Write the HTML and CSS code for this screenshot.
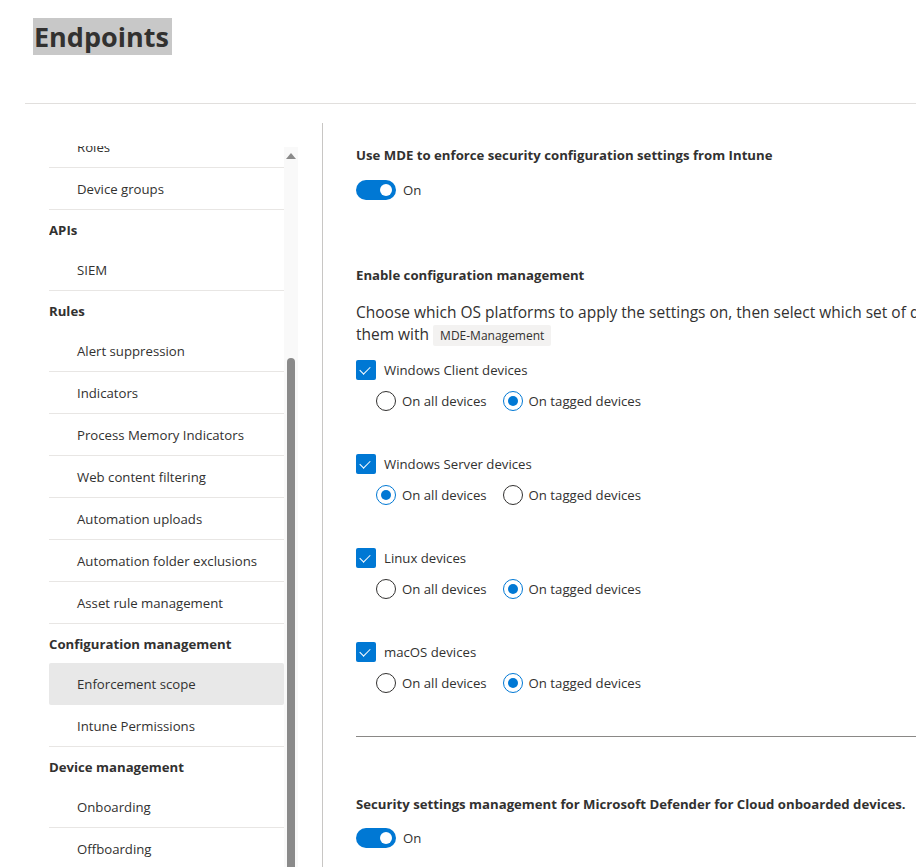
FILE: index.html
```html
<!DOCTYPE html>
<html lang="en">
<head>
    <meta charset="UTF-8">
    <title>Endpoints</title>
    <link rel="stylesheet" href="styles.css">
</head>
<body>

<div class="top">
    <h1><span>Endpoints</span></h1>
</div>

<div class="main">
    <div class="side">
        <div class="nav-view">
            <ul class="nav">
                <li class="item">Roles</li>
                <li class="item">Device groups</li>
                <li class="group">APIs</li>
                <li class="item">SIEM</li>
                <li class="group">Rules</li>
                <li class="item">Alert suppression</li>
                <li class="item">Indicators</li>
                <li class="item">Process Memory Indicators</li>
                <li class="item">Web content filtering</li>
                <li class="item">Automation uploads</li>
                <li class="item">Automation folder exclusions</li>
                <li class="item">Asset rule management</li>
                <li class="group">Configuration management</li>
                <li class="item selected">Enforcement scope</li>
                <li class="item">Intune Permissions</li>
                <li class="group">Device management</li>
                <li class="item">Onboarding</li>
                <li class="item">Offboarding</li>
            </ul>
        </div>
        <div class="scrollbar">
            <div class="arrow"></div>
            <div class="thumb"></div>
        </div>
    </div>

    <div class="content">
        <h3 class="first">Use MDE to enforce security configuration settings from Intune</h3>
        <div class="toggle-row"><span class="toggle"></span>On</div>

        <h3 class="second">Enable configuration management</h3>
        <p class="desc">Choose which OS platforms to apply the settings on, then select which set of devices to apply the settings to. Tag<br>them with <span class="tag">MDE-Management</span></p>

        <div class="platforms">
            <div class="platform">
                <div class="check-row"><span class="check"></span>Windows Client devices</div>
                <div class="radio-row">
                    <label><span class="radio"></span>On all devices</label>
                    <label><span class="radio on"></span>On tagged devices</label>
                </div>
            </div>
            <div class="platform">
                <div class="check-row"><span class="check"></span>Windows Server devices</div>
                <div class="radio-row">
                    <label><span class="radio on"></span>On all devices</label>
                    <label><span class="radio"></span>On tagged devices</label>
                </div>
            </div>
            <div class="platform">
                <div class="check-row"><span class="check"></span>Linux devices</div>
                <div class="radio-row">
                    <label><span class="radio"></span>On all devices</label>
                    <label><span class="radio on"></span>On tagged devices</label>
                </div>
            </div>
            <div class="platform">
                <div class="check-row"><span class="check"></span>macOS devices</div>
                <div class="radio-row">
                    <label><span class="radio"></span>On all devices</label>
                    <label><span class="radio on"></span>On tagged devices</label>
                </div>
            </div>
        </div>

        <hr class="divider">

        <h3 class="third">Security settings management for Microsoft Defender for Cloud onboarded devices.</h3>
        <div class="toggle-row last"><span class="toggle"></span>On</div>
    </div>
</div>

</body>
</html>
```

FILE: styles.css
```css
body {
    font-family: "Segoe UI", "Open Sans", Arial, sans-serif;
    font-size: 13.2px;
    color: #323130;
    background: #fff;
    margin: 0;
    overflow: hidden;
    height: 867px;
}
.top {
    margin-left: 25px;
    height: 103px;
    border-bottom: 1px solid #e1dfdd;
}
.top h1 {
    margin: 0;
    padding: 18px 0 0 8px;
    font-size: 27px;
    font-weight: 700;
    line-height: 37px;
}
.top h1 span {
    display: inline-block;
    background: #c8c8c8;
    padding: 0 3px 0 1px;
}
.main {
    display: flex;
    height: 763px;
}
.side {
    width: 323px;
    flex-shrink: 0;
    display: flex;
    margin-top: 19px;
    border-right: 1px solid #c8c6c4;
    box-sizing: border-box;
}
.nav-view {
    margin: 23px 0 0 49px;
    width: 235px;
    overflow: hidden;
}
.nav {
    list-style: none;
    margin: -20px 0 0;
    padding: 0;
}
.nav li {
    box-sizing: border-box;
    display: flex;
    align-items: center;
}
.nav .item {
    height: 42px;
    padding-left: 28px;
    border-bottom: 1px solid #e8e6e4;
}
.nav .group {
    height: 39px;
    font-weight: 700;
}
.nav .selected {
    background: #e8e8e8;
    border-radius: 2px;
    border-bottom-color: transparent;
}
.scrollbar {
    width: 14px;
    margin-top: 24px;
    background: #f9f9f9;
    display: flex;
    flex-direction: column;
    align-items: center;
}
.scrollbar .arrow {
    margin-top: 6px;
    width: 0;
    height: 0;
    border-left: 5px solid transparent;
    border-right: 5px solid transparent;
    border-bottom: 6px solid #8a8a8a;
}
.scrollbar .thumb {
    margin-top: 199px;
    width: 8px;
    flex: 1;
    background: #8a8a8a;
    border-radius: 4px 4px 0 0;
}
.content {
    padding-left: 33px;
    width: 800px;
    flex-shrink: 0;
}
.content h3 {
    font-size: 13.2px;
    font-weight: 700;
    margin: 0;
    line-height: 20px;
}
.content h3.first {
    margin-top: 41px;
}
.content h3.second {
    margin-top: 65px;
}
.content h3.third {
    margin-top: 57px;
}
.toggle-row {
    display: flex;
    align-items: center;
    gap: 7px;
    margin-top: 15px;
    height: 20px;
}
.toggle-row.last {
    margin-top: 14px;
}
.toggle {
    width: 40px;
    height: 20px;
    border-radius: 10px;
    background: #0078d4;
    position: relative;
}
.toggle::after {
    content: "";
    position: absolute;
    right: 4px;
    top: 4px;
    width: 12px;
    height: 12px;
    border-radius: 50%;
    background: #fff;
}
.desc {
    font-size: 15.5px;
    line-height: 22px;
    margin: 16px 0 0;
    white-space: nowrap;
}
.tag {
    background: #f3f2f1;
    font-size: 12px;
    padding: 2px 7px;
    border-radius: 2px;
}
.platforms {
    margin-top: 13px;
}
.platform {
    height: 94px;
}
.check-row {
    display: flex;
    align-items: center;
    gap: 8px;
    height: 20px;
}
.check {
    width: 20px;
    height: 20px;
    background: #0078d4;
    border-radius: 2px;
    position: relative;
}
.check::after {
    content: "";
    position: absolute;
    left: 6px;
    top: 4px;
    width: 5px;
    height: 9px;
    border: solid #fff;
    border-width: 0 1.5px 1.5px 0;
    transform: rotate(45deg);
}
.radio-row {
    display: flex;
    gap: 16px;
    margin: 11px 0 0 20px;
}
.radio-row label {
    display: flex;
    align-items: center;
    gap: 6px;
    height: 20px;
}
.radio {
    width: 20px;
    height: 20px;
    border: 1px solid #323130;
    border-radius: 50%;
    box-sizing: border-box;
    position: relative;
}
.radio.on {
    border-color: #0078d4;
}
.radio.on::after {
    content: "";
    position: absolute;
    left: 4px;
    top: 4px;
    width: 10px;
    height: 10px;
    border-radius: 50%;
    background: #0078d4;
}
.divider {
    border: none;
    border-top: 1px solid #8a8886;
    margin: 0;
}
```
